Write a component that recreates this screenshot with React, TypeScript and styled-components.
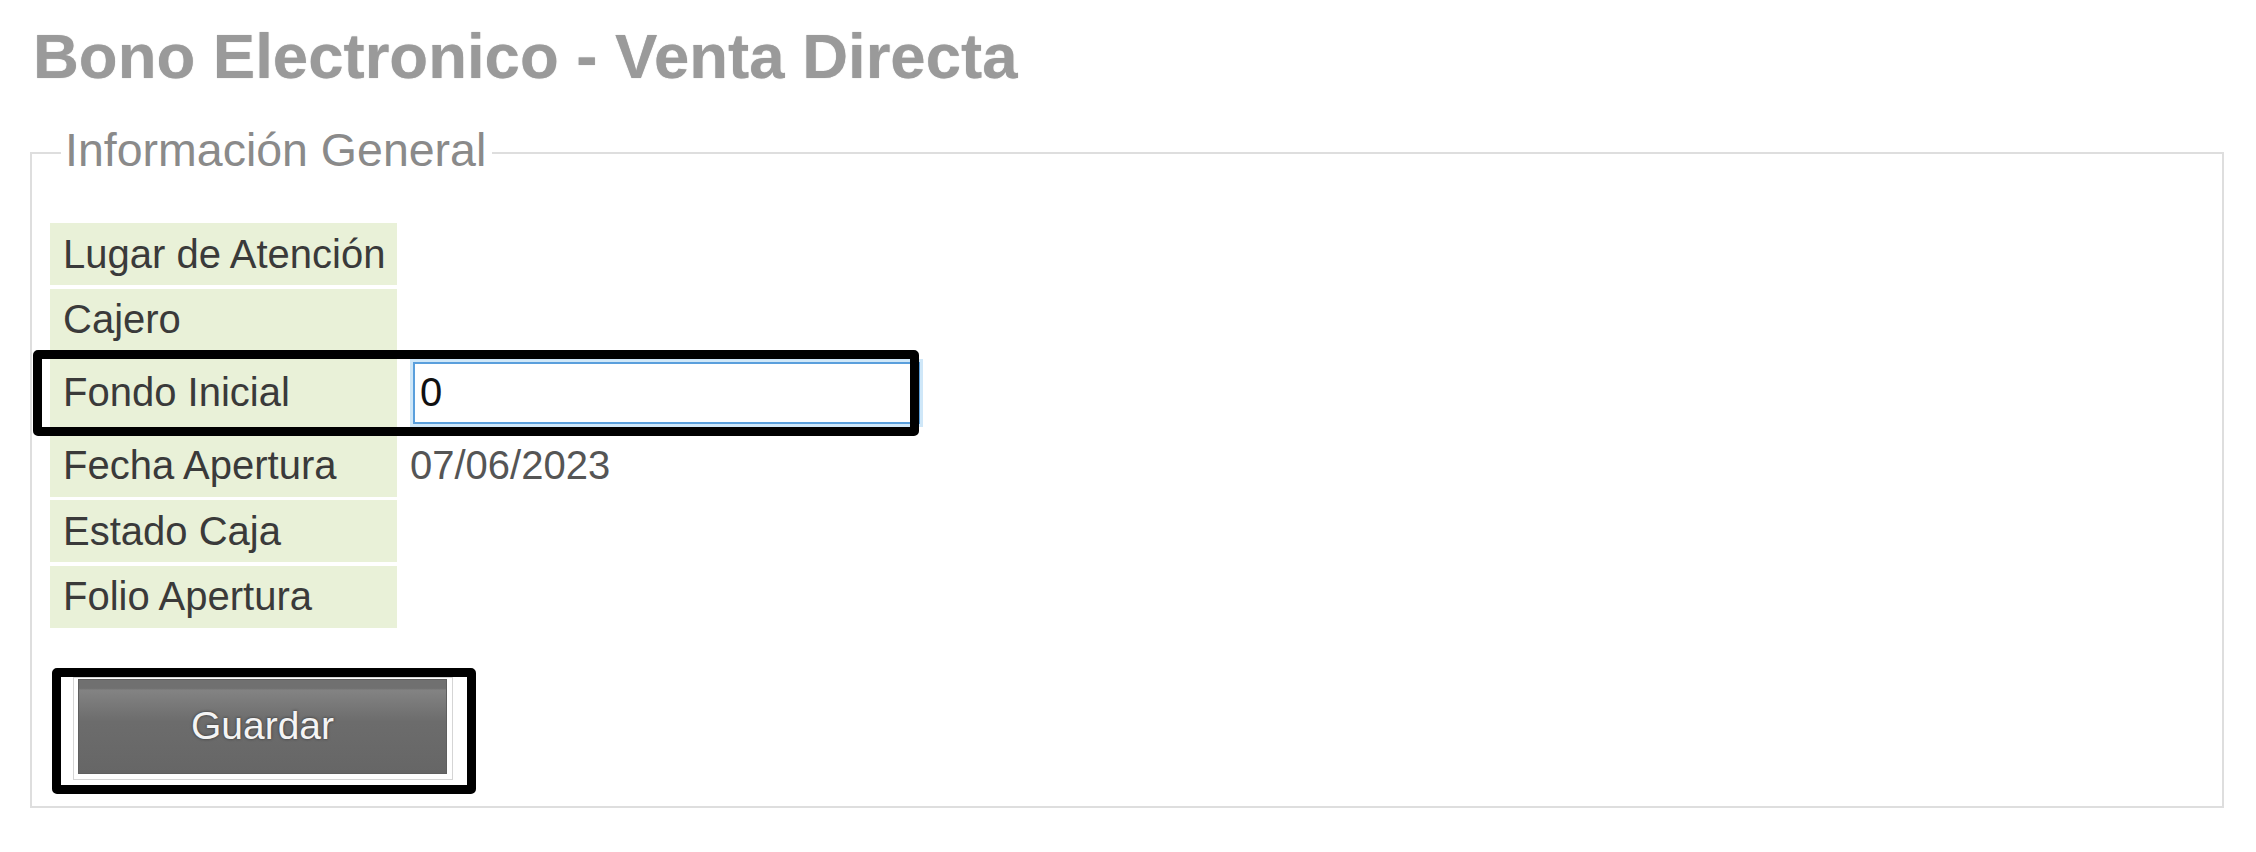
import React from 'react';
import styled, { createGlobalStyle } from 'styled-components';

const GlobalStyle = createGlobalStyle`
  html, body {
    margin: 0;
    padding: 0;
    background: #ffffff;
    font-family: "Liberation Sans", Arial, sans-serif;
  }
`;

const Page = styled.div`
  padding: 20px 32px 0 30px;
`;

const Title = styled.h1`
  margin: 0 0 0 3px;
  font-size: 63.5px;
  line-height: 72px;
  font-weight: bold;
  color: #9a9a9a;
  text-shadow: 0 0 1px #b0b0b0;
`;

const Fieldset = styled.fieldset`
  margin: 31px 0 0 0;
  padding: 40px 30px 26px 18px;
  border: 2px solid #dedede;
  min-inline-size: 0;
`;

const Legend = styled.legend`
  margin-left: 11px;
  padding: 0 6px 6px 4px;
  font-size: 46.5px;
  color: #8a8a8a;
`;

const Rows = styled.div`
  display: flex;
  flex-direction: column;
  gap: 3.3px;
`;

const Row = styled.div<{ $height: number }>`
  position: relative;
  display: grid;
  grid-template-columns: 347px 1fr;
  column-gap: 4px;
  height: ${(p) => p.$height}px;
`;

const Label = styled.div`
  display: flex;
  align-items: center;
  padding-left: 13px;
  background: #e9f1d8;
  font-size: 40px;
  color: #3a3a3a;
  white-space: nowrap;
`;

const Value = styled.div`
  display: flex;
  align-items: center;
  padding-left: 9px;
  font-size: 40px;
  color: #555555;
`;

const Input = styled.input`
  box-sizing: border-box;
  width: 507px;
  height: 62px;
  margin-left: 3px;
  padding: 0 5px;
  border: 2px solid #5a9fdc;
  border-radius: 0;
  box-shadow: 0 0 0 3px #cfe7f8;
  outline: none;
  font-family: "Liberation Sans", Arial, sans-serif;
  font-size: 40px;
  color: #111111;
  background: #ffffff;
`;

// marcas negras dibujadas encima de la captura
const Highlight = styled.span<{ $left: number; $top: number; $w: number; $h: number }>`
  position: absolute;
  left: ${(p) => p.$left}px;
  top: ${(p) => p.$top}px;
  width: ${(p) => p.$w}px;
  height: ${(p) => p.$h}px;
  box-sizing: border-box;
  border: 9px solid #000000;
  border-radius: 5px;
  pointer-events: none;
  z-index: 2;
`;

const ButtonArea = styled.div`
  position: relative;
  display: inline-block;
  margin: 48.7px 0 0 23px;
`;

const ButtonFrame = styled.div`
  border: 1px solid #d5d5d5;
  padding: 1px 5px 5px 4px;
  background: #ffffff;
`;

const SaveButton = styled.button`
  display: block;
  width: 369px;
  height: 95px;
  padding: 0;
  border: 1px solid #5f5f5f;
  background: linear-gradient(
    to bottom,
    #707070 0,
    #707070 9%,
    #838383 11%,
    #6c6c6c 45%,
    #666666 100%
  );
  font-family: "Liberation Sans", Arial, sans-serif;
  font-size: 39px;
  color: #f4f4f4;
  text-shadow: 0 0 3px #2e2e2e;
  cursor: pointer;
`;

const fields = [
  { label: 'Lugar de Atención', value: '' },
  { label: 'Cajero', value: '' },
  { label: 'Fondo Inicial', input: '0' },
  { label: 'Fecha Apertura', value: '07/06/2023' },
  { label: 'Estado Caja', value: '' },
  { label: 'Folio Apertura', value: '' },
];

export default function App() {
  return (
    <>
      <GlobalStyle />
      <Page>
        <Title>Bono Electronico - Venta Directa</Title>
        <Fieldset>
          <Legend>Información General</Legend>
          <Rows>
            {fields.map((f) =>
              f.input !== undefined ? (
                <Row key={f.label} $height={77}>
                  <Label>{f.label}</Label>
                  <Value>
                    <Input type="text" defaultValue={f.input} autoFocus />
                  </Value>
                  <Highlight $left={-17} $top={-4} $w={886} $h={86} />
                </Row>
              ) : (
                <Row key={f.label} $height={62.3}>
                  <Label>{f.label}</Label>
                  <Value>{f.value}</Value>
                </Row>
              )
            )}
          </Rows>
          <ButtonArea>
            <ButtonFrame>
              <SaveButton type="button">Guardar</SaveButton>
            </ButtonFrame>
            <Highlight $left={-21} $top={-9} $w={424} $h={126} />
          </ButtonArea>
        </Fieldset>
      </Page>
    </>
  );
}
